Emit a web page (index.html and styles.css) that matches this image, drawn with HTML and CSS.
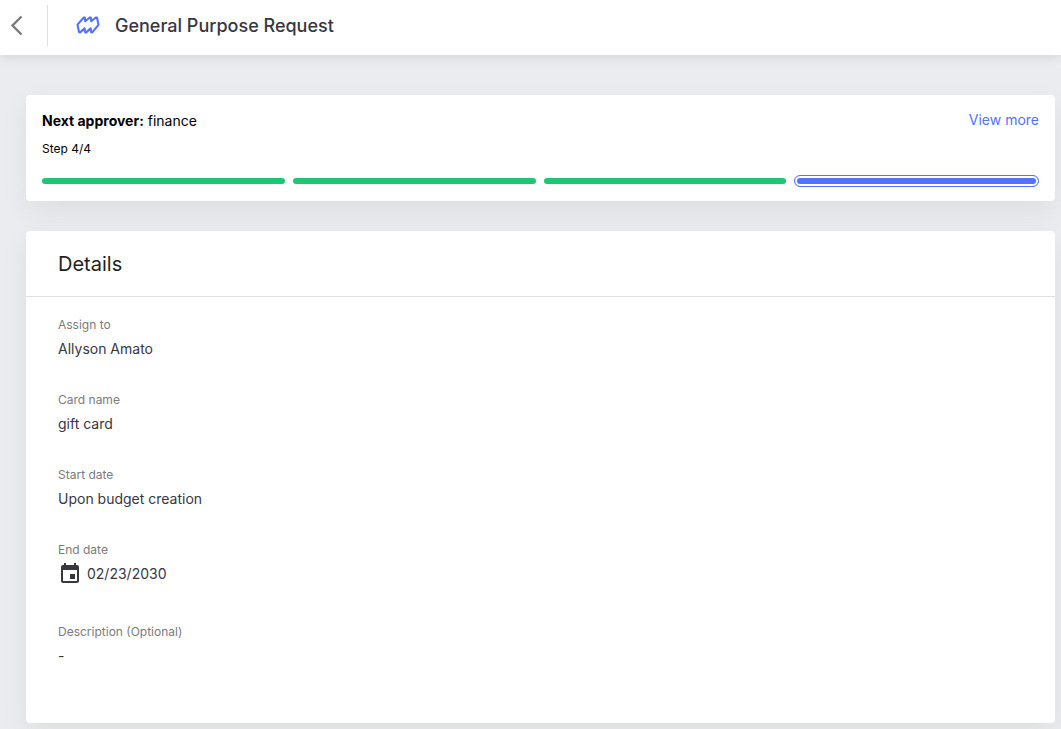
FILE: index.html
```html
<!DOCTYPE html>
<html lang="en">
<head>
    <meta charset="utf-8">
    <title>General Purpose Request</title>
    <link rel="stylesheet" href="styles.css">
</head>
<body>
    <header class="header">
        <button class="back-button" type="button" aria-label="Back">
            <svg width="14" height="21" viewBox="0 0 14 21" fill="none" stroke="#7b7b7b" stroke-width="2.4">
                <path d="M11.5 1.5 L2.5 10.5 L11.5 19.5" />
            </svg>
        </button>
        <div class="header-title">
            <svg class="logo" width="24" height="21" viewBox="0 0 24 21" fill="none" stroke="#5272ff" stroke-width="2.1" stroke-linejoin="round">
                <path d="M4.2 17.400 L3 17 L1.500 9.600 L7.800 2.500 L8.800 2.500 L9.200 6.200 L13.800 2.500 L14.800 2.500 L15.200 6.200 L19.800 2.500 L21 2.500 L22.500 9.800 L16.200 17.400 L15.200 17.400 L14.600 13.400 L10.200 17.400 L9.200 17.400 L8.600 13.400 Z" />
            </svg>
            <h1>General Purpose Request</h1>
        </div>
    </header>
    <main class="content">
        <section class="card approval">
            <div class="approval-top">
                <p class="approver"><strong>Next approver:</strong> finance</p>
                <a class="view-more" href="#">View more</a>
            </div>
            <p class="step-label">Step 4/4</p>
            <div class="steps">
                <div class="step"></div>
                <div class="step"></div>
                <div class="step"></div>
                <div class="step step-current"></div>
            </div>
        </section>
        <section class="card">
            <h2 class="card-title">Details</h2>
            <dl class="fields">
                <div class="field">
                    <dt>Assign to</dt>
                    <dd>Allyson Amato</dd>
                </div>
                <div class="field">
                    <dt>Card name</dt>
                    <dd>gift card</dd>
                </div>
                <div class="field">
                    <dt>Start date</dt>
                    <dd>Upon budget creation</dd>
                </div>
                <div class="field field-date">
                    <dt>End date</dt>
                    <dd>
                        <svg width="24" height="24" viewBox="0 0 24 24" fill="#38363f">
                            <path d="M17 12h-5v5h5v-5zM16 1v2H8V1H6v2H5c-1.11 0-1.99.9-1.99 2L3 19c0 1.1.89 2 2 2h14c1.1 0 2-.9 2-2V5c0-1.1-.9-2-2-2h-1V1h-2zm3 18H5V8h14v11z" />
                        </svg>
                        02/23/2030
                    </dd>
                </div>
                <div class="field">
                    <dt>Description (Optional)</dt>
                    <dd>-</dd>
                </div>
            </dl>
        </section>
    </main>
</body>
</html>
```

FILE: styles.css
```css
:root {
    --background: #ebecf0;
    --card: #ffffff;
    --primary: #5272ff;
    --success: #1bc775;
    --text: #38363f;
    --muted: #7b7b7d;
    --border: #e0e0e0;
}

* {
    box-sizing: border-box;
}

body {
    margin: 0;
    min-height: 100vh;
    background: var(--background);
    color: var(--text);
    font-family: Inter, 'Liberation Sans', sans-serif;
    font-size: 14px;
    line-height: 24px;
}

h1, h2, p, dl, dd {
    margin: 0;
}

.header {
    display: flex;
    padding: 5px 0 9px;
    background: var(--card);
    box-shadow: 0 2px 10px rgba(0, 0, 0, 0.1);
}

.back-button {
    display: flex;
    align-items: center;
    width: 48px;
    height: 41px;
    padding: 0 0 0 10px;
    background: none;
    border: none;
    border-right: 1px solid var(--border);
    cursor: pointer;
}

.header-title {
    display: flex;
    align-items: center;
    gap: 15px;
    padding-left: 28px;
}

.header-title h1 {
    font-size: 18px;
    font-weight: 500;
}

.content {
    display: flex;
    flex-direction: column;
    gap: 30px;
    padding: 40px 6px 6px 26px;
}

.card {
    background: var(--card);
    border-radius: 4px;
    box-shadow: 0 10px 30px rgba(0, 0, 0, 0.06);
}

.approval {
    padding: 14px 16px;
    color: #000000;
}

.approval-top {
    display: flex;
    justify-content: space-between;
}

.view-more {
    color: var(--primary);
    line-height: 22px;
    text-decoration: none;
}

.step-label {
    margin-top: 8px;
    font-size: 12px;
    line-height: 16px;
}

.steps {
    display: flex;
    align-items: center;
    gap: 8px;
    height: 12px;
    margin-top: 18px;
}

.step {
    flex: 1;
    height: 6px;
    border-radius: 3px;
    background: var(--success);
}

.step-current {
    height: 12px;
    border: 1px solid var(--primary);
    border-radius: 6px;
    background: linear-gradient(var(--primary), var(--primary)) padding-box;
    box-shadow: inset 0 0 0 2px var(--card);
}

.card-title {
    padding: 21px 32px 20px;
    border-bottom: 1px solid var(--border);
    color: #1f1f21;
    font-size: 20px;
    font-weight: 400;
}

.fields {
    display: flex;
    flex-direction: column;
    gap: 31px;
    padding: 20px 32px 55px;
}

.field dt {
    margin-bottom: 4px;
    color: var(--muted);
    font-size: 12px;
    line-height: 16px;
}

.field-date dd {
    display: flex;
    align-items: center;
    gap: 5px;
    padding-bottom: 7px;
}
```
